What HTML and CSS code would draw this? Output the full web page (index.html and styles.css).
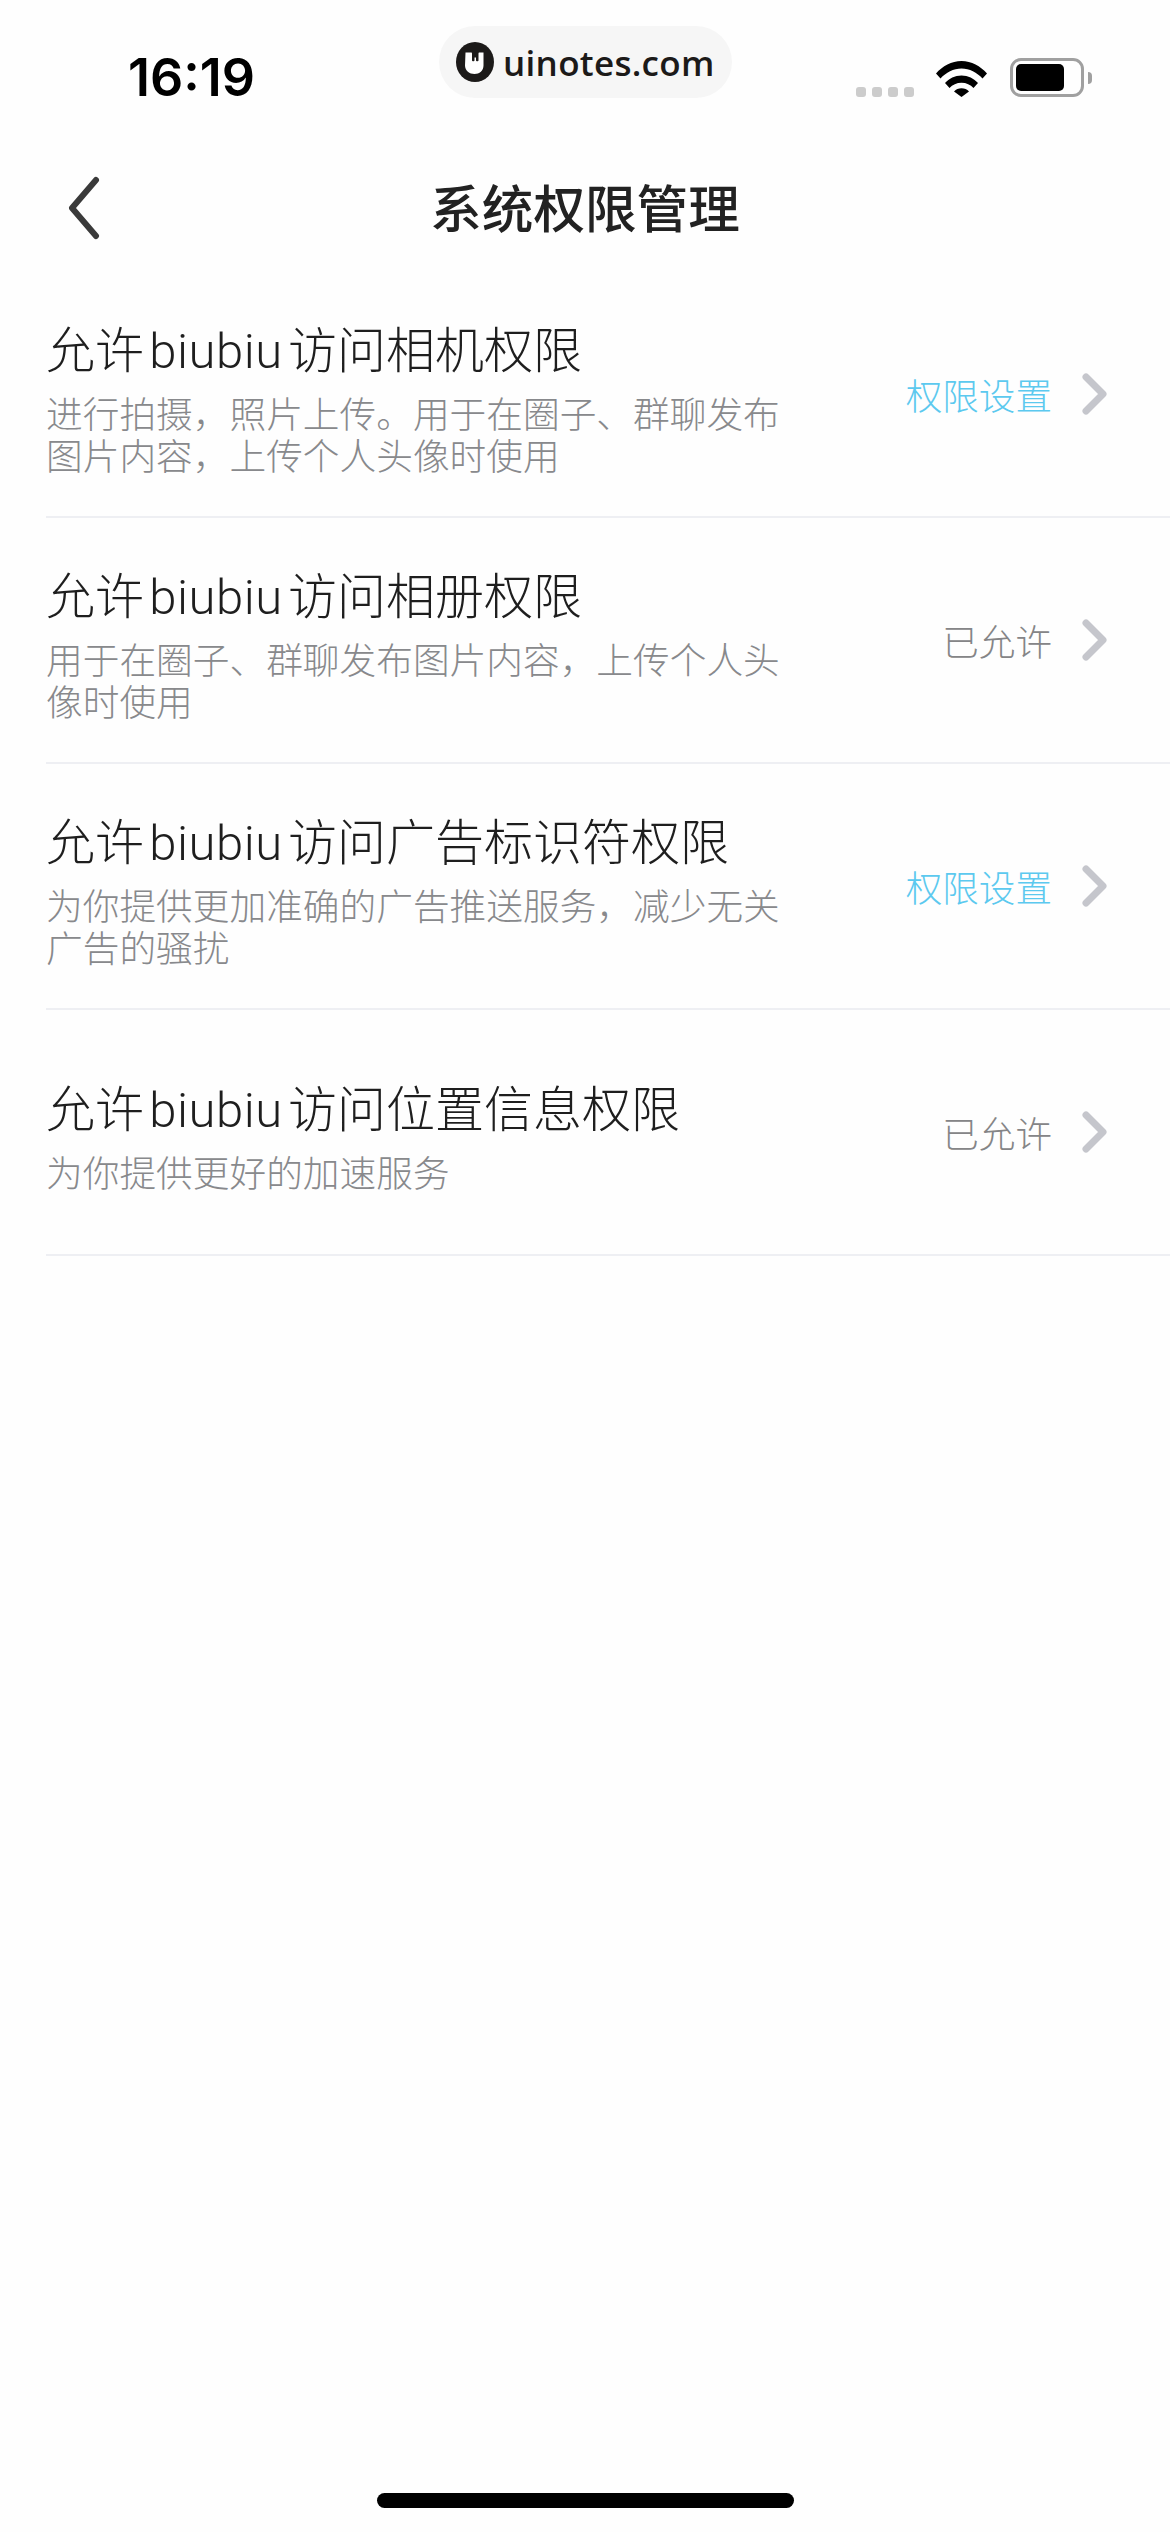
FILE: index.html
```html
<!DOCTYPE html>
<html lang="zh-CN">
<head>
    <meta charset="UTF-8">
    <meta name="viewport" content="width=device-width, initial-scale=1.0">
    <title>系统权限管理</title>
    <link rel="stylesheet" href="styles.css">
</head>
<body>
    <div class="screen">
        <div class="status-bar">
            <span class="time">16:19</span>
            <div class="status-icons">
                <div class="signal">
                    <i></i><i></i><i></i><i></i>
                </div>
                <svg class="wifi" width="51" height="38" viewBox="0 0 51 38">
                    <path d="M0 14.500C6.500 7 15.500 2 25.500 2S44.500 7 51 14.500L46.500 19.500C41 13.500 33.500 9.500 25.500 9.500S10 13.500 4.500 19.500Z"/>
                    <path d="M9 24C13 19.500 19 16.500 25.500 16.500S38 19.500 42 24L37.500 29C34.500 25.800 30.300 23.800 25.500 23.800S16.500 25.800 13.500 29Z"/>
                    <path d="M18 32.500C20 30.500 22.500 29.300 25.500 29.300S31 30.500 33 32.500L25.500 38Z"/>
                </svg>
                <div class="battery">
                    <div class="battery-body"><div class="battery-level"></div></div>
                    <div class="battery-cap"></div>
                </div>
            </div>
        </div>

        <div class="site-pill">
            <svg class="site-logo" width="38" height="40" viewBox="0 0 38 40">
                <ellipse cx="19" cy="20" rx="19" ry="20" fill="#1c1a19"/>
                <path d="M9.500 10.500h5.500c.8 0 1 .5 1 1.200v6.800c0 1 2.500 1 2.500 0v-3h1.500v3c0 1 2.500 1 2.500 0v-6.800c0-.7.2-1.200 1-1.200h4v13c0 5-4 8.500-9 8.500s-9.500-3.500-9.500-8.500Z" fill="#fff"/>
            </svg>
            <span>uinotes.com</span>
        </div>

        <header class="nav-bar">
            <svg class="back" width="32" height="64" viewBox="0 0 32 64">
                <path d="M28 4 4 32l24 28" fill="none" stroke="#3a3a3a" stroke-width="6" stroke-linecap="round" stroke-linejoin="round"/>
            </svg>
            <h1>系统权限管理</h1>
        </header>

        <ul class="perm-list">
            <li class="perm-row">
                <div class="perm-text">
                    <div class="perm-title">允许 <span class="app-name">biubiu</span> 访问相机权限</div>
                    <div class="perm-desc">进行拍摄，照片上传。用于在圈子、群聊发布图片内容，上传个人头像时使用</div>
                </div>
                <span class="perm-state link">权限设置</span>
                <svg class="arrow" width="25" height="42" viewBox="0 0 25 42"><path d="M4 4l17 17L4 38"/></svg>
            </li>
            <li class="perm-row">
                <div class="perm-text">
                    <div class="perm-title">允许 <span class="app-name">biubiu</span> 访问相册权限</div>
                    <div class="perm-desc">用于在圈子、群聊发布图片内容，上传个人头像时使用</div>
                </div>
                <span class="perm-state">已允许</span>
                <svg class="arrow" width="25" height="42" viewBox="0 0 25 42"><path d="M4 4l17 17L4 38"/></svg>
            </li>
            <li class="perm-row">
                <div class="perm-text">
                    <div class="perm-title">允许 <span class="app-name">biubiu</span> 访问广告标识符权限</div>
                    <div class="perm-desc">为你提供更加准确的广告推送服务，减少无关广告的骚扰</div>
                </div>
                <span class="perm-state link">权限设置</span>
                <svg class="arrow" width="25" height="42" viewBox="0 0 25 42"><path d="M4 4l17 17L4 38"/></svg>
            </li>
            <li class="perm-row">
                <div class="perm-text">
                    <div class="perm-title">允许 <span class="app-name">biubiu</span> 访问位置信息权限</div>
                    <div class="perm-desc">为你提供更好的加速服务</div>
                </div>
                <span class="perm-state">已允许</span>
                <svg class="arrow" width="25" height="42" viewBox="0 0 25 42"><path d="M4 4l17 17L4 38"/></svg>
            </li>
        </ul>

        <div class="home-bar"></div>
    </div>
</body>
</html>
```

FILE: styles.css
```css
* {
    box-sizing: border-box;
}

body {
    margin: 0;
    background-color: #fefefe;
    font-family: "Noto Sans CJK SC", "Noto Sans", sans-serif;
    color: #222;
}

.screen {
    position: relative;
    width: 1170px;
    height: 2532px;
    display: flex;
    flex-direction: column;
    overflow: hidden;
}

/* status bar */
.status-bar {
    height: 142px;
    padding: 48px 78px 0 128px;
    display: flex;
    justify-content: space-between;
    align-items: flex-start;
}

.time {
    font-family: Inter, "Liberation Sans", sans-serif;
    font-size: 52px;
    font-weight: 600;
    line-height: 60px;
    color: #000;
}

.status-icons {
    display: flex;
    align-items: flex-end;
    padding-top: 10px;
}

.signal {
    display: flex;
    gap: 6px;
    margin-right: 22px;
}

.signal i {
    width: 10px;
    height: 10px;
    border-radius: 3px;
    background-color: #ccc;
}

.wifi {
    margin-right: 23px;
}

.battery {
    display: flex;
    align-items: center;
}

.battery-body {
    width: 74px;
    height: 39px;
    border: 3px solid #a0a0a0;
    border-radius: 11px;
    padding: 3px;
}

.battery-level {
    width: 48px;
    height: 100%;
    background-color: #000;
    border-radius: 5px;
}

.battery-cap {
    width: 4px;
    height: 12px;
    margin-left: 4px;
    background-color: #a0a0a0;
    border-radius: 0 6px 6px 0;
}

/* the site pill lies over the status bar */
.site-pill {
    position: absolute;
    left: 439px;
    top: 26px;
    width: 293px;
    height: 72px;
    padding-left: 17px;
    display: flex;
    align-items: center;
    gap: 9px;
    background-color: #f6f6f6;
    border-radius: 36px;
    font-family: "Open Sans", sans-serif;
    font-size: 35px;
    font-weight: 600;
    letter-spacing: .3px;
    color: #1c1a19;
}

/* nav */
.nav-bar {
    position: relative;
    height: 130px;
    display: flex;
    align-items: center;
    justify-content: center;
}

.nav-bar h1 {
    margin: -3px 0 0;
    font-size: 51.6px;
    font-weight: 500;
    line-height: 72px;
    color: #222;
}

.back {
    position: absolute;
    left: 68px;
    top: 34px;
}

/* permission rows */
.perm-list {
    margin: 0;
    padding: 0 0 0 46px;
    list-style: none;
}

.perm-row {
    height: 246px;
    padding-right: 63px;
    display: flex;
    align-items: center;
    border-bottom: 2px solid #eeeff3;
}

.perm-text {
    width: 738px;
    flex: none;
}

.perm-title {
    font-size: 49px;
    font-weight: 300;
    line-height: 66px;
    color: #1e1e1e;
    margin-bottom: 6px;
    word-spacing: -5.500px;
}

.app-name {
    font-family: Roboto, sans-serif;
    font-weight: 300;
    letter-spacing: .5px;
}

.perm-desc {
    font-size: 36.7px;
    font-weight: 300;
    line-height: 42px;
    color: #88898c;
}

.perm-state {
    margin-left: auto;
    font-size: 36.6px;
    font-weight: 300;
    color: #858587;
}

.perm-state.link {
    color: #5cc9ef;
}

.arrow {
    margin-left: 30px;
    flex: none;
}

.arrow path {
    fill: none;
    stroke: #c5c6cc;
    stroke-width: 7;
    stroke-linecap: round;
    stroke-linejoin: round;
}

.home-bar {
    margin: auto auto 24px;
    width: 417px;
    height: 15px;
    border-radius: 8px;
    background-color: #000;
}
```
